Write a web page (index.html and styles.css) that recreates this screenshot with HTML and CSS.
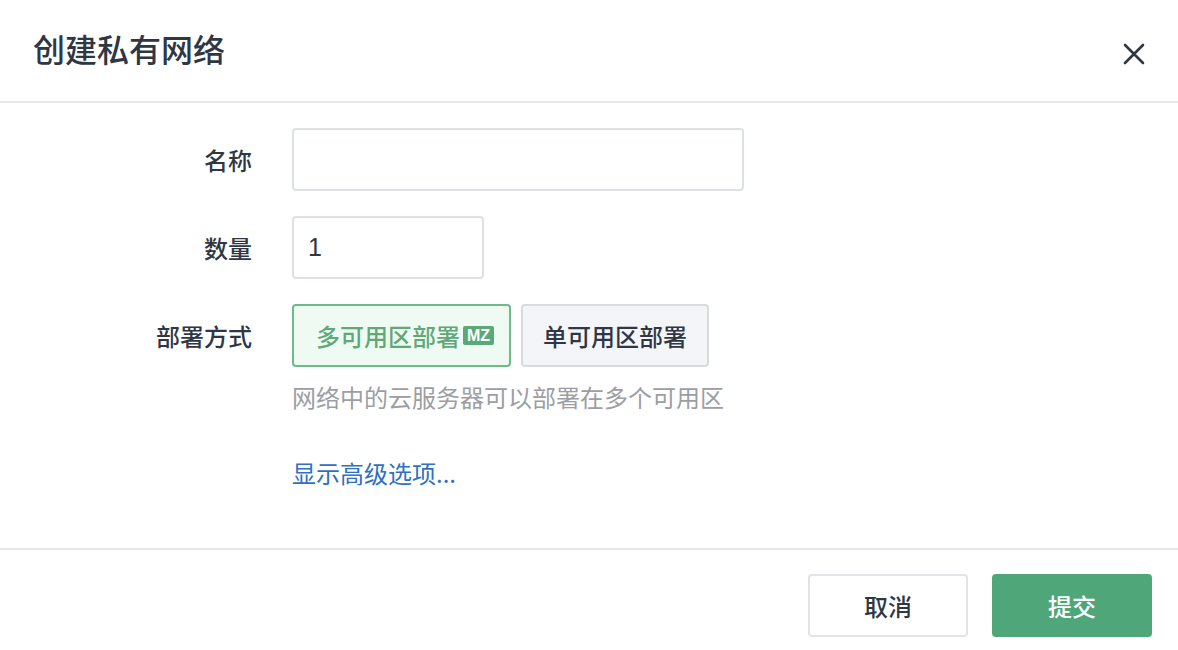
FILE: index.html
```html
<!DOCTYPE html>
<html lang="zh-CN">
<head>
    <meta charset="UTF-8">
    <title>创建私有网络</title>
    <link rel="stylesheet" href="styles.css">
</head>
<body>
    <div class="dialog">
        <div class="dialog-header">
            <h1>创建私有网络</h1>
            <button class="close" type="button" aria-label="关闭">
                <svg width="24" height="24" viewBox="0 0 24 24">
                    <path d="M3 3 L21 21 M21 3 L3 21" stroke="#2f3744" stroke-width="2.6" stroke-linecap="round" fill="none"/>
                </svg>
            </button>
        </div>

        <form class="dialog-body">
            <label class="field-label" for="name">名称</label>
            <div class="field"><input type="text" id="name" class="input input-wide"></div>

            <label class="field-label" for="count">数量</label>
            <div class="field"><input type="text" id="count" class="input input-short" value="1"></div>

            <div class="field-label">部署方式</div>
            <div class="field">
                <div class="choices">
                    <button type="button" class="choice active">多可用区部署<span class="badge">MZ</span></button>
                    <button type="button" class="choice">单可用区部署</button>
                </div>
                <p class="hint">网络中的云服务器可以部署在多个可用区</p>
                <a href="#" class="more">显示高级选项...</a>
            </div>
        </form>

        <div class="dialog-footer">
            <button type="button" class="btn">取消</button>
            <button type="button" class="btn btn-primary">提交</button>
        </div>
    </div>
</body>
</html>
```

FILE: styles.css
```css
body {
    margin: 0;
    padding: 0;
    font-family: "Noto Sans CJK SC", "Noto Sans", sans-serif;
    background-color: #fff;
    color: #2f3744;
}

.dialog {
    width: 1178px;
    height: 650px;
    background-color: #fff;
}

.dialog-header {
    height: 101px;
    border-bottom: 2px solid #e6e7ea;
    display: flex;
    align-items: center;
    justify-content: space-between;
    padding: 0 32px 0 33px;
}

.dialog-header h1 {
    margin: 0;
    font-size: 32px;
    font-weight: 500;
    color: #2f3744;
    position: relative;
    top: -3px;
}

.close {
    background: none;
    border: none;
    padding: 0;
    width: 24px;
    height: 24px;
    cursor: pointer;
    position: relative;
    top: 3px;
}

.dialog-body {
    display: grid;
    grid-template-columns: 252px 1fr;
    column-gap: 40px;
    row-gap: 25px;
    padding: 25px 0 0 0;
    height: 420px;
    box-sizing: border-box;
    align-content: start;
}

.field-label {
    text-align: right;
    font-size: 24px;
    font-weight: 500;
    color: #2f3744;
    line-height: 63px;
    height: 63px;
}

.input {
    box-sizing: border-box;
    height: 63px;
    border: 2px solid #dde0e5;
    border-radius: 4px;
    padding: 0 14px;
    font-family: "Liberation Sans", Arial, sans-serif;
    font-size: 25px;
    color: #2f3744;
    outline: none;
}

.input-wide {
    width: 452px;
}

.input-short {
    width: 192px;
}

.choices {
    display: flex;
    gap: 10px;
}

.choice {
    box-sizing: border-box;
    height: 63px;
    padding: 0 20px;
    border: 2px solid #d7dadf;
    border-radius: 4px;
    background-color: #f4f5f8;
    font-family: inherit;
    font-size: 24px;
    font-weight: 500;
    color: #2f3744;
    display: flex;
    align-items: center;
    cursor: pointer;
}

.choice.active {
    padding: 0 15px 0 22px;
    border-color: #6dbb8a;
    background-color: #effaf3;
    color: #5fa877;
}

.badge {
    margin-left: 3px;
    background-color: #5ba878;
    color: #fff;
    font-family: "Liberation Sans", Arial, sans-serif;
    font-size: 16px;
    font-weight: bold;
    line-height: 19px;
    padding: 0 4px;
    border-radius: 2px;
}

.hint {
    margin: 14px 0 0 0;
    font-size: 24px;
    line-height: 32px;
    color: #9b9ea3;
}

.more {
    display: inline-block;
    margin-top: 44px;
    font-size: 24px;
    line-height: 32px;
    color: #2f6fc4;
    text-decoration: none;
}

.dialog-footer {
    border-top: 2px solid #e6e7ea;
    margin-top: 25px;
    display: flex;
    justify-content: flex-end;
    gap: 24px;
    padding: 24px 26px 0 0;
}

.btn {
    box-sizing: border-box;
    width: 160px;
    height: 63px;
    border: 2px solid #e1e3e7;
    border-radius: 4px;
    background-color: #fff;
    font-family: inherit;
    font-size: 24px;
    font-weight: 500;
    color: #2f3744;
    cursor: pointer;
}

.btn-primary {
    background-color: #4fa679;
    border-color: #4fa679;
    color: #fff;
}
```
